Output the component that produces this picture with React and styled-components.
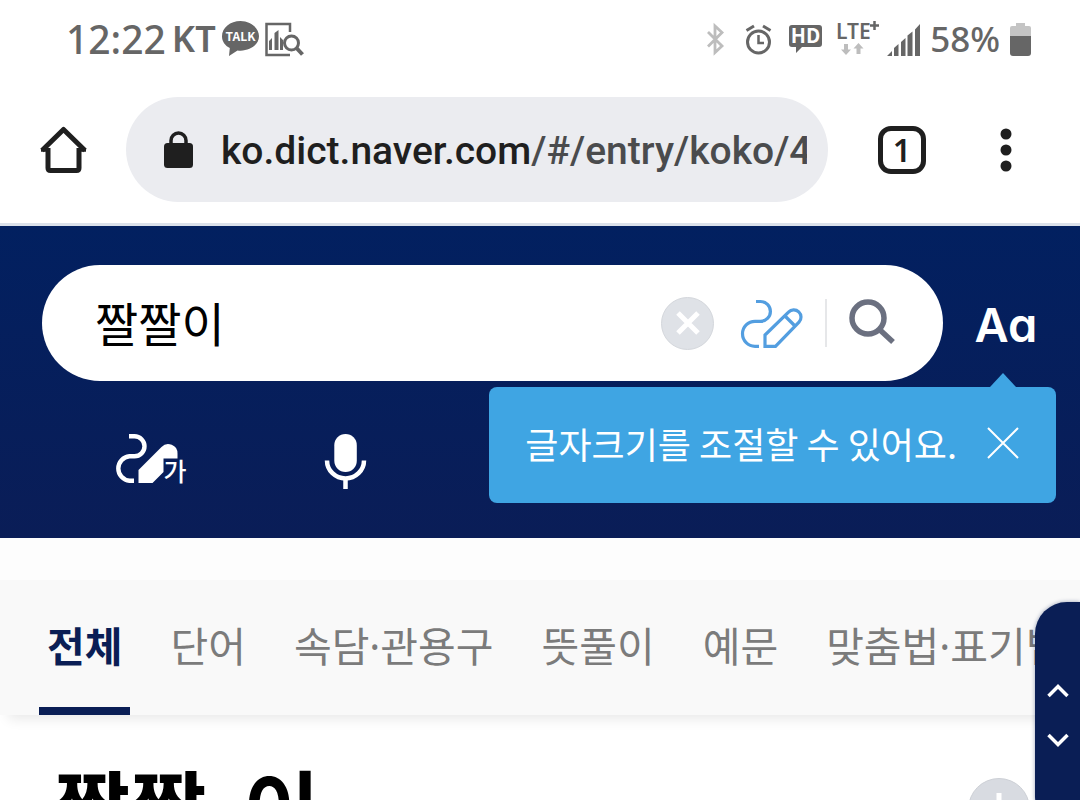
import React, { useState } from 'react';
import styled, { createGlobalStyle } from 'styled-components';

const GlobalStyle = createGlobalStyle`
    *{
        box-sizing:border-box;
    }

    body{
        margin:0;
        background:white;
        font-family:"Noto Sans CJK KR", "Noto Sans", sans-serif;
    }

    button{
        border:none;
        background:none;
        padding:0;
        margin:0;
        color:inherit;
        font-family:inherit;
        display:flex;
        align-items:center;
        justify-content:center;
        flex-shrink:0;

        &:hover{
            cursor:pointer;
        }
    }

    svg{
        display:block;
        flex-shrink:0;
        overflow:visible;
    }
`

const Page = styled.div`
    position:relative;
    height:100vh;
    overflow:hidden;
`

const StatusBar = styled.div`
    height:78px;
    padding:0 49px 0 66px;
    display:flex;
    align-items:center;
    justify-content:space-between;
    color:#666;
    font-family:"Noto Sans", sans-serif;
`

const StatusGroup = styled.div`
    display:flex;
    align-items:center;
    gap:${props => props.$gap}px;
`

const StatusText = styled.span`
    font-size:${props => props.$size}px;
    font-weight:${props => props.$weight || 500};
    line-height:40px;
`

const Toolbar = styled.div`
    height:148px;
    padding:0 52px 2px 40px;
    display:flex;
    align-items:center;
    border-bottom:3px solid #dbe1ea;
    color:#1f1f1f;
`

const AddressBar = styled.button`
    flex:1;
    min-width:0;
    height:105px;
    margin:0 50px 0 38px;
    padding:0 21px 0 38px;
    gap:28px;
    border-radius:53px;
    background:#ebecf0;
    justify-content:flex-start;
`

const Url = styled.span`
    flex:1;
    min-width:0;
    padding-top:3px;
    overflow:hidden;
    white-space:nowrap;
    text-align:left;
    font-family:Roboto, sans-serif;
    font-size:39px;
    font-weight:500;
    line-height:52px;
    color:#4a4b4d;

    b{
        font-weight:500;
        color:#1f1f1f;
    }
`

const TabCount = styled.button`
    width:48px;
    height:48px;
    border:5px solid #1f1f1f;
    border-radius:13px;
    font-family:"Noto Sans", sans-serif;
    font-size:32px;
    font-weight:600;
    line-height:32px;
`

const MenuButton = styled.button`
    width:44px;
    height:48px;
    margin-left:58px;
`

const Header = styled.header`
    position:relative;
    height:312px;
    padding:39px 44px 0 42px;
    background:linear-gradient(#022060, #0a1d57);
    color:white;
`

const SearchRow = styled.div`
    display:flex;
    align-items:center;
    gap:33px;
`

const SearchForm = styled.form`
    flex:1;
    min-width:0;
    height:116px;
    padding:0 48px 0 53px;
    display:flex;
    align-items:center;
    border-radius:58px;
    background:white;
`

const SearchInput = styled.input`
    flex:1;
    min-width:0;
    padding:0 0 3px;
    border:none;
    outline:none;
    background:none;
    color:black;
    font-family:inherit;
    font-size:47px;
    line-height:64px;
`

const ClearButton = styled.button`
    width:53px;
    height:53px;
    margin-right:27px;
    border:1px solid #d4d7dc;
    border-radius:50%;
    background:#dfe2e7;
`

const Divider = styled.span`
    width:2px;
    height:48px;
    margin:0 22px;
    background:#e6e7e9;
`

const FontSizeButton = styled.button`
    width:60px;
    padding-top:4px;
    font-family:Inter, sans-serif;
    font-feature-settings:"cv11";
    font-size:47px;
    font-weight:600;
    line-height:60px;
`

const Tools = styled.div`
    display:flex;
    gap:138px;
    padding:53px 73px 0;
`

const Tooltip = styled.div`
    position:absolute;
    top:161px;
    right:24px;
    height:116px;
    padding:0 37px 5px 36px;
    display:flex;
    align-items:center;
    gap:30px;
    border-radius:8px;
    background:#3fa5e3;
    font-size:36px;
    line-height:52px;
    white-space:nowrap;

    &::before{
        content:'';
        position:absolute;
        top:-14px;
        right:40px;
        border:13px solid transparent;
        border-top:0;
        border-bottom:14px solid #3fa5e3;
    }
`

const Content = styled.div`
    padding-top:42px;
    background:#fdfdfd;
`

const Tabs = styled.nav`
    position:relative;
    height:135px;
    padding-left:39px;
    display:flex;
    gap:32px;
    background:#f9f9f9;
    box-shadow:0 12px 12px -8px rgba(0,0,0,.09);
`

const Tab = styled.a`
    padding:5px 8px 0;
    display:flex;
    align-items:center;
    flex-shrink:0;
    border-bottom:8px solid ${props => props.$active ? '#0a1e55' : 'transparent'};
    color:${props => props.$active ? '#0a1e55' : '#7b7b7b'};
    font-family:"Noto Sans", "Noto Sans CJK KR", sans-serif;
    font-size:41px;
    font-weight:${props => props.$active ? 700 : 400};
    line-height:60px;
    text-decoration:none;
    white-space:nowrap;
`

const Entry = styled.main`
    padding:36px 50px 0 54px;
    display:flex;
    align-items:flex-start;
    justify-content:space-between;
    min-height:200px;
    background:white;
`

const Word = styled.h1`
    margin:0;
    color:black;
    font-size:83px;
    font-weight:700;
    line-height:108px;

    span{
        padding:0 3px;
    }
`

const AddButton = styled.button`
    width:62px;
    height:62px;
    margin-top:27px;
    border:1px solid #cdd0d6;
    border-radius:50%;
    background:#d8dbe1;
`

const SidePager = styled.div`
    position:absolute;
    top:602px;
    right:0;
    width:45px;
    height:226px;
    padding-top:76px;
    display:flex;
    flex-direction:column;
    align-items:center;
    gap:24px;
    border-radius:32px 0 0 32px;
    background:#0a1e55;
    color:white;
    box-shadow:0 0 4px rgba(10,30,85,.4);

    button{
        width:24px;
        height:25px;
    }
`

const tabs = ['전체', '단어', '속담·관용구', '뜻풀이', '예문', '맞춤법·표기법'];

const TalkIcon = () => (
    <svg width="37" height="36" viewBox="0 0 37 36">
        <path d="M18.500 0C8.300 0 0 6.800 0 15.200c0 5.200 3 9.300 7.800 11.800L7 35l8.500-5.500c1 .2 2 .2 3 .2 10.200 0 18.500-6.500 18.500-14.500S28.700 0 18.500 0z" fill="#666" />
        <text x="18.500" y="20" textAnchor="middle" fontSize="12" fontWeight="700" fontFamily="Noto Sans CJK KR, sans-serif" fill="#fff">TALK</text>
    </svg>
);

const ReportIcon = () => (
    <svg width="38" height="36" viewBox="0 0 38 36" fill="none" stroke="#666">
        <path d="M25 11V3H1.500v31H25" strokeWidth="2.500" />
        <path d="M4 29v-9l3-3v12zM9.500 29V12l4-3v20zM15 29V16l3 3v10z" fill="#666" stroke="none" />
        <circle cx="26.500" cy="22" r="7" strokeWidth="3" />
        <path d="M31.500 27l6 6.500" strokeWidth="4" />
    </svg>
);

const BluetoothIcon = () => (
    <svg width="28" height="36" viewBox="0 0 28 36" fill="none" stroke="#bdbdbd" strokeWidth="2.800">
        <path d="M1 11l14 14-7 6.500V5l7 6.500L1 25.500" />
    </svg>
);

const AlarmIcon = () => (
    <svg width="34" height="36" viewBox="0 0 34 36" fill="none" stroke="#666" strokeWidth="3">
        <circle cx="13.500" cy="21" r="11" />
        <path d="M13.500 14V22H19" strokeWidth="2.500" />
        <path d="M1.500 9.500L9 5M18 5l7.500 4.500" />
    </svg>
);

const HdIcon = () => (
    <svg width="38" height="36" viewBox="0 0 38 36">
        <path d="M3 4h27q3 0 3 3v16q0 3-3 3H13l-6 6v-6H3q-3 0-3-3V7q0-3 3-3z" fill="#666" />
        <text x="16.500" y="22" textAnchor="middle" fontSize="20" fontWeight="700" fontFamily="Noto Sans CJK KR, sans-serif" fill="#fff">HD</text>
    </svg>
);

const LteIcon = () => (
    <svg width="41" height="36" viewBox="0 0 41 36">
        <text x="-1" y="18" fontSize="21" fontWeight="600" fontFamily="Noto Sans, sans-serif" fill="#666">LTE</text>
        <path d="M37.500 0v9M33 4.500h9" stroke="#666" strokeWidth="2.500" />
        <path d="M9 34l-5-5.500h3V23h4v5.500h3zM21.500 22l5 5.500h-3V33h-4v-5.500h-3z" fill="#bdbdbd" />
    </svg>
);

const SignalIcon = () => (
    <svg width="32" height="36" viewBox="0 0 32 36">
        <path d="M-1 35l5-5v5zM6 35v-8l4.500-4v12zM13 35V21l4.500-4v18zM19.500 35V14.500l5-4V35zM27 35V8.500L32 3v32z" fill="#666" />
    </svg>
);

const BatteryIcon = () => (
    <svg width="21" height="36" viewBox="0 0 21 36">
        <path d="M0 16V7q0-2 2-2h4V2h9v3h4q2 0 2 2v9z" fill="#c4c4c4" />
        <path d="M0 15h21v17q0 3-3 3H3q-3 0-3-3z" fill="#666" />
    </svg>
);

const HomeIcon = () => (
    <svg width="48" height="48" viewBox="0 0 48 48" fill="none" stroke="currentColor" strokeWidth="5">
        <path d="M8 22v20q0 2.500 2.500 2.500h26q2.500 0 2.500-2.500V22" />
        <path d="M2 24.500L23.500 3.500 45 24.500" strokeLinejoin="round" />
        <path d="M1 24h8M38 24h8" strokeWidth="3.500" />
    </svg>
);

const LockIcon = () => (
    <svg width="29" height="38" viewBox="0 0 29 38">
        <rect y="12" width="29" height="25" rx="3.500" fill="#1f1f1f" />
        <path d="M7 14V9.500a7.500 7.500 0 0 1 15 0V14" fill="none" stroke="#1f1f1f" strokeWidth="3.500" />
    </svg>
);

const DotsIcon = () => (
    <svg width="12" height="44" viewBox="0 0 12 44" fill="currentColor">
        <circle cx="6" cy="6" r="5.500" />
        <circle cx="6" cy="22" r="5.500" />
        <circle cx="6" cy="38" r="5.500" />
    </svg>
);

const CrossIcon = ({ size, width }) => (
    <svg width={size} height={size} viewBox={`0 0 ${size} ${size}`} stroke="#fff" strokeWidth={width}>
        <path d={`M1 1L${size - 1} ${size - 1}M${size - 1} 1L1 ${size - 1}`} />
    </svg>
);

const PlusIcon = () => (
    <svg width="32" height="32" viewBox="0 0 32 32" stroke="#fff" strokeWidth="5">
        <path d="M16 0v32M0 16h32" />
    </svg>
);

const PenIcon = () => (
    <svg width="62" height="46" viewBox="0 0 62 46" fill="none" stroke="#539ee0" strokeWidth="3.200">
        <path d="M15 1.500h4.500a9.900 9.900 0 0 1 0 19.800H14a12.500 12.500 0 0 0 0 25h4" />
        <path d="M24 46.300V35L47.500 12.200a7 7 0 0 1 10.500 10L34.500 46.300zM44 16l9.500 9.500" />
    </svg>
);

const SearchIcon = () => (
    <svg width="46" height="48" viewBox="0 0 46 48" fill="none" stroke="#6b7080" strokeWidth="5.500">
        <circle cx="19" cy="19" r="16" />
        <path d="M30.500 30.500L44 43" />
    </svg>
);

const HandwritingIcon = () => (
    <svg width="72" height="55" viewBox="0 0 72 55">
        <path d="M14 2.300h5.500a10 10 0 0 1 0 20h-5a12.300 12.300 0 0 0 0 24.500H19" fill="none" stroke="#fff" strokeWidth="4.400" />
        <path d="M23.500 49V36L46.500 13a9.300 9.300 0 0 1 16 6.500v5h-14V38L37.500 49z" fill="#fff" />
        <text x="48.500" y="46.500" fontSize="25" fontWeight="500" fill="#fff">가</text>
    </svg>
);

const MicIcon = () => (
    <svg width="41" height="55" viewBox="0 0 41 55">
        <rect x="9.300" width="22.500" height="38" rx="11.200" fill="#fff" />
        <path d="M2 26.500a18.500 18 0 0 0 37 0M20.500 44v11" fill="none" stroke="#fff" strokeWidth="4.500" />
    </svg>
);

const ChevronIcon = ({ down }) => (
    <svg width="24" height="14" viewBox="0 0 24 14" fill="none" stroke="currentColor" strokeWidth="3.500">
        <path d={down ? 'M2.500 2L12 11.500 21.500 2' : 'M2.500 12L12 2.500 21.500 12'} />
    </svg>
);

function App() {
    const [query, setQuery] = useState('짤짤이');
    const [tab, setTab] = useState('전체');
    const [showTip, setShowTip] = useState(true);

    return (
        <Page>
            <GlobalStyle />
            <StatusBar>
                <StatusGroup $gap={6}>
                    <StatusText $size={39}>12:22</StatusText>
                    <StatusText $size={36} $weight={600}>KT</StatusText>
                    <TalkIcon />
                    <ReportIcon />
                </StatusGroup>
                <StatusGroup $gap={10}>
                    <BluetoothIcon />
                    <AlarmIcon />
                    <HdIcon />
                    <LteIcon />
                    <SignalIcon />
                    <StatusText $size={35}>58%</StatusText>
                    <BatteryIcon />
                </StatusGroup>
            </StatusBar>

            <Toolbar>
                <button aria-label="홈"><HomeIcon /></button>
                <AddressBar>
                    <LockIcon />
                    <Url><b>ko.dict.naver.com</b>/#/entry/koko/4</Url>
                </AddressBar>
                <TabCount>1</TabCount>
                <MenuButton aria-label="메뉴"><DotsIcon /></MenuButton>
            </Toolbar>

            <Header>
                <SearchRow>
                    <SearchForm onSubmit={ev => ev.preventDefault()}>
                        <SearchInput
                            type="text"
                            name="query"
                            aria-label="검색어"
                            value={query}
                            onChange={ev => setQuery(ev.target.value)}
                        />
                        <ClearButton type="button" aria-label="지우기" onClick={() => setQuery('')}>
                            <CrossIcon size={22} width={5} />
                        </ClearButton>
                        <button type="button" aria-label="필기인식기"><PenIcon /></button>
                        <Divider />
                        <button type="submit" aria-label="검색"><SearchIcon /></button>
                    </SearchForm>
                    <FontSizeButton>Aa</FontSizeButton>
                </SearchRow>
                <Tools>
                    <button aria-label="필기 번역"><HandwritingIcon /></button>
                    <button aria-label="음성 검색"><MicIcon /></button>
                </Tools>
                {showTip && (
                    <Tooltip role="status">
                        글자크기를 조절할 수 있어요.
                        <button aria-label="닫기" onClick={() => setShowTip(false)}>
                            <CrossIcon size={32} width={2} />
                        </button>
                    </Tooltip>
                )}
            </Header>

            <Content>
                <Tabs>
                    {tabs.map(name => (
                        <Tab key={name} href="#" $active={name === tab} onClick={() => setTab(name)}>
                            {name}
                        </Tab>
                    ))}
                </Tabs>
                <Entry>
                    <Word>짤짤<span>-</span>이</Word>
                    <AddButton aria-label="단어장 저장"><PlusIcon /></AddButton>
                </Entry>
            </Content>

            <SidePager>
                <button aria-label="위로"><ChevronIcon /></button>
                <button aria-label="아래로"><ChevronIcon down /></button>
            </SidePager>
        </Page>
    );
}

export default App;
